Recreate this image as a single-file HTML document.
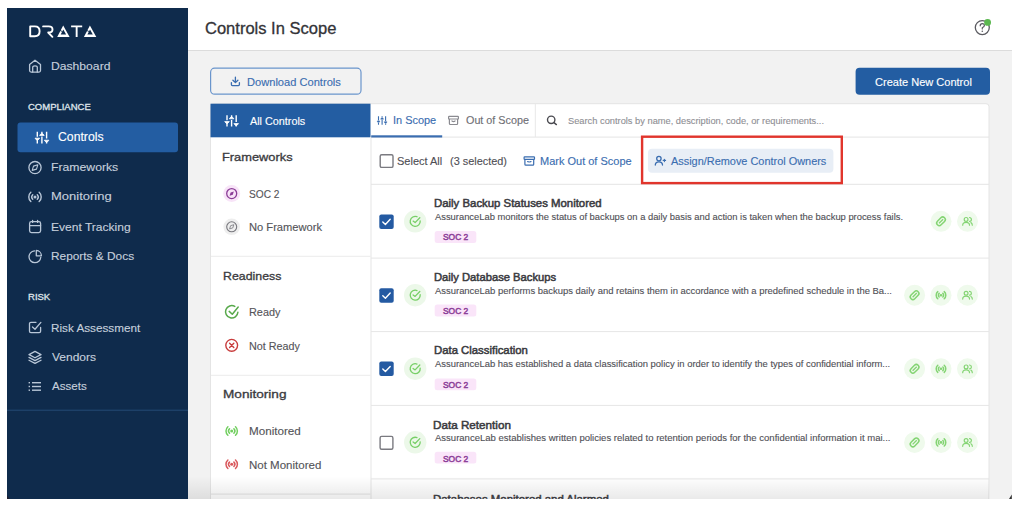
<!DOCTYPE html>
<html><head><meta charset="utf-8">
<style>
html,body{margin:0;padding:0;background:#fff;width:1024px;height:507px;overflow:hidden;}
body{position:relative;font-family:"Liberation Sans",sans-serif;}
.t{position:absolute;white-space:nowrap;line-height:1;transform-origin:0 0;}
svg.ov{position:absolute;left:0;top:0;}
</style></head><body>
<svg class="ov" width="1024" height="507" viewBox="0 0 1024 507">
<defs>
<linearGradient id="btm" x1="0" y1="0" x2="0" y2="1">
<stop offset="0" stop-color="#000" stop-opacity="0"/>
<stop offset="1" stop-color="#000" stop-opacity="0.085"/>
</linearGradient>
<linearGradient id="lsh" x1="0" y1="0" x2="1" y2="0">
<stop offset="0" stop-color="#fff" stop-opacity="0.0"/>
<stop offset="0.3" stop-color="#fff" stop-opacity="0.5"/>
<stop offset="1" stop-color="#fff" stop-opacity="0"/>
</linearGradient>
</defs>
<!-- sidebar -->
<rect x="7" y="8" width="181" height="491" fill="#0f2b4c"/>
<rect x="7" y="409.7" width="181" height="1" fill="#244a75"/>
<rect x="17.5" y="122.6" width="160.5" height="29.6" rx="3" fill="#235da2"/>
<!-- main -->
<rect x="188" y="8" width="824" height="491" fill="#f2f2f2"/>
<rect x="188" y="8" width="824" height="42" fill="#ffffff"/>
<rect x="188" y="50" width="824" height="1" fill="#dcdcdc"/>
<!-- download button -->
<rect x="210.6" y="68.2" width="150.4" height="26" rx="4" fill="none" stroke="#6a95cc" stroke-width="1.2"/>
<!-- create button -->
<rect x="855.6" y="67.8" width="134.4" height="27" rx="4" fill="#235da2"/>
<!-- card -->
<rect x="210.5" y="103.7" width="778.5" height="420" rx="3" fill="#ffffff" stroke="#e4e4e4" stroke-width="1"/>
<rect x="210.5" y="103.7" width="160" height="33.6" fill="#235da2"/>
<!-- filter panel border & dividers -->
<rect x="370.5" y="137" width="1" height="370" fill="#e6e6e6"/>
<rect x="211" y="255.8" width="159.5" height="1" fill="#ececec"/>
<rect x="211" y="374.8" width="159.5" height="1" fill="#ececec"/>
<rect x="211" y="493.6" width="159.5" height="1" fill="#e4e4e4"/>
<!-- tabs -->
<rect x="371" y="136.6" width="618" height="1" fill="#e4e4e4"/>
<rect x="371.2" y="135.3" width="71" height="2.2" fill="#3a6db0"/>
<rect x="534.8" y="104" width="1" height="33" fill="#e8e8e8"/>
<rect x="371" y="183.8" width="618" height="1" fill="#e4e4e4"/>
<!-- row dividers -->
<rect x="371" y="257.6" width="618" height="1" fill="#e6e6e6"/>
<rect x="371" y="331.1" width="618" height="1" fill="#e6e6e6"/>
<rect x="371" y="404.9" width="618" height="1" fill="#e6e6e6"/>
<rect x="371" y="478.4" width="618" height="1" fill="#e6e6e6"/>
<!-- assign button + red box -->
<rect x="648" y="148.8" width="185.4" height="24" rx="4" fill="#e8eef6"/>
<rect x="642.1" y="136.7" width="199.7" height="46.4" fill="none" stroke="#e1352c" stroke-width="2.4"/>
<!-- ICONS -->
<!-- DRATA logo -->
<g fill="none" stroke="#ffffff" stroke-width="1.9" stroke-linejoin="round">
<path d="M30.2,26.4 H34.8 Q39.6,26.4 39.6,31.3 Q39.6,36.2 34.8,36.2 H30.2 Z"/>
<path d="M43.1,26.4 H48.8 Q52.5,26.4 52.5,29.5 Q52.5,32.5 48.8,32.5 H48.2 L52.4,36.8" stroke-linecap="round"/>
<path d="M71.1,26.4 H82.2 M76.65,26.4 V37.1"/>
</g>
<g fill="#ffffff" fill-rule="evenodd">
<path d="M57.2,37.1 L63.2,25.5 L69.6,37.1 Z M60.7,34.5 L63.3,29.4 L66.1,34.5 Z"/>
<path d="M83.9,37.1 L89.9,25.5 L96.3,37.1 Z M87.4,34.5 L90,29.4 L92.8,34.5 Z"/>
</g>
<g stroke="#0f2b4c" stroke-width="0.9">
<path d="M59.6,30.2 L62.4,31.6"/>
<path d="M86.3,30.2 L89.1,31.6"/>
</g>
<!-- sidebar icons -->
<g fill="none" stroke="#b9c7d8" stroke-width="1.3" stroke-linecap="round" stroke-linejoin="round">
<!-- home -->
<path d="M29.6,64.4 L35,60.2 L40.5,64.4 V70.6 Q40.5,72.1 39,72.1 H31.1 Q29.6,72.1 29.6,70.6 Z"/>
<path d="M32.7,72 V67.2 Q32.7,65.8 35,65.8 Q37.3,65.8 37.3,67.2 V72"/>
<!-- compass -->
<circle cx="35" cy="167.6" r="6.1"/>
<path d="M32.2,170.4 L33.5,166.1 L37.8,164.8 L36.5,169.1 Z" fill="none" stroke-width="1.1"/>
<!-- monitoring -->
</g>
<g fill="none" stroke="#b9c7d8" stroke-width="1.4" stroke-linecap="round"><circle cx="35" cy="196.9" r="1.5" fill="#b9c7d8" stroke="none"/><path d="M32.74,194.64 A3.2,3.2 0 0 0 32.74,199.16 M37.26,194.64 A3.2,3.2 0 0 1 37.26,199.16"/><path d="M30.85,192.29 A6.2,6.2 0 0 0 30.85,201.51 M39.15,192.29 A6.2,6.2 0 0 1 39.15,201.51"/></g>
<g fill="none" stroke="#b9c7d8" stroke-width="1.3" stroke-linecap="round" stroke-linejoin="round">
<!-- calendar -->
<rect x="29.6" y="221.6" width="11" height="11" rx="1.8"/>
<path d="M29.6,225.6 H40.6 M32.6,220.4 V222.4 M37.6,220.4 V222.4"/>
<!-- pie -->
<path d="M34.4,250.9 A5.9,5.9 0 1 0 40.8,257.3"/>
<path d="M36.3,250.4 V255.8 H41.4 A5.4,5.4 0 0 0 36.3,250.4 Z"/>
<!-- risk check square -->
<path d="M40.6,327.5 V331.2 Q40.6,332.6 39.2,332.6 H30.9 Q29.5,332.6 29.5,331.2 V323.6 Q29.5,322.3 30.9,322.3 H36"/>
<path d="M32.5,326.9 L35,329.2 L40.9,322.4"/>
<!-- layers -->
<path d="M35,351.4 L41,354.6 L35,357.8 L29,354.6 Z"/>
<path d="M29,357.4 L35,360.6 L41,357.4 M29,360.2 L35,363.4 L41,360.2"/>
</g>
<!-- list icon -->
<g fill="#b9c7d8">
<rect x="28.6" y="382" width="1.4" height="1.4"/><rect x="28.6" y="385.8" width="1.4" height="1.4"/><rect x="28.6" y="389.5" width="1.4" height="1.4"/>
<rect x="32" y="382" width="9" height="1.4"/><rect x="32" y="385.8" width="9" height="1.4"/><rect x="32" y="389.5" width="9" height="1.4"/>
</g>
<!-- controls sliders (sidebar active, white) -->
<g stroke="#ffffff" stroke-width="1.4" stroke-linecap="butt" fill="#ffffff">
<path d="M37.3,131.8 V136.8 M37.3,139.4 V143.4 M41.9,131.8 V133.6 M41.9,136.6 V143.4 M46.6,131.8 V138.6 M46.6,141.4 V143.4" fill="none"/>
<path d="M35,138.2 H39.6 L38,140 H36.6 Z" stroke-width="0.8"/>
<path d="M39.6,135.4 H44.2 L42.6,133.6 H41.2 Z" stroke-width="0.8"/>
<path d="M44.3,140.2 H48.9 L47.3,142 H45.9 Z" stroke-width="0.8"/>
</g>
<!-- All Controls sliders (white) -->
<g stroke="#ffffff" stroke-width="1.4" fill="#ffffff">
<path d="M227,115.2 V120.2 M227,122.8 V126.6 M231.6,115.2 V117 M231.6,120 V126.6 M236.2,115.2 V122 M236.2,124.8 V126.6" fill="none"/>
<path d="M224.7,121.6 H229.3 L227.7,123.4 H226.3 Z" stroke-width="0.8"/>
<path d="M229.3,118.8 H233.9 L232.3,117 H230.9 Z" stroke-width="0.8"/>
<path d="M233.9,123.6 H238.5 L236.9,125.4 H235.5 Z" stroke-width="0.8"/>
</g>
<!-- In Scope sliders (blue) -->
<g stroke="#3a6db0" stroke-width="1.1" fill="#3a6db0">
<path d="M378.5,116.2 V120.4 M378.5,122.8 V124.8 M382.1,116.2 V117.4 M382.1,119.8 V124.8 M385.6,116.2 V121.2 M385.6,123.6 V124.8" fill="none"/>
<path d="M377.1,121 H379.9 L379.2,122.3 H377.8 Z" stroke-width="0.5"/>
<path d="M380.7,119.2 H383.5 L382.8,117.9 H381.4 Z" stroke-width="0.5"/>
<path d="M384.2,121.8 H387 L386.3,123.1 H384.9 Z" stroke-width="0.5"/>
</g>
<!-- download icon -->
<g fill="none" stroke="#3a6db0" stroke-width="1.3" stroke-linecap="round" stroke-linejoin="round">
<path d="M235.4,77.2 V82.4 M232.9,80.2 L235.4,82.6 L237.9,80.2"/>
<path d="M231.4,82.6 V84.6 Q231.4,85.6 232.4,85.6 H238.4 Q239.4,85.6 239.4,84.6 V82.6"/>
</g>
<!-- out of scope archive (gray) -->
<g fill="none" stroke="#8a8a90" stroke-width="1.2" stroke-linejoin="round">
<rect x="448.6" y="116.4" width="9.8" height="2.6" rx="0.6"/>
<path d="M449.4,119 V123.6 Q449.4,124.5 450.3,124.5 H456.7 Q457.6,124.5 457.6,123.6 V119"/>
<path d="M451.8,120.6 Q451.8,121.6 453.5,121.6 Q455.2,121.6 455.2,120.6"/>
</g>
<!-- mark out of scope archive (blue) -->
<g fill="none" stroke="#3a6db0" stroke-width="1.2" stroke-linejoin="round">
<rect x="524.1" y="156.8" width="10.4" height="2.6" rx="0.6"/>
<path d="M524.9,159.4 V164.2 Q524.9,165.1 525.8,165.1 H532.8 Q533.7,165.1 533.7,164.2 V159.4"/>
<path d="M527.5,161 Q527.5,162 529.3,162 Q531.1,162 531.1,161"/>
</g>
<!-- search -->
<g fill="none" stroke="#4a4a50" stroke-width="1.4" stroke-linecap="round">
<circle cx="551.2" cy="119.8" r="3.7"/>
<path d="M554,122.6 L556.4,124.6"/>
</g>
<!-- user plus -->
<g fill="none" stroke="#3a6db0" stroke-width="1.3" stroke-linecap="round">
<circle cx="658.9" cy="158.6" r="2.2"/>
<path d="M655.3,165 Q655.3,161.8 658.9,161.8 Q662.5,161.8 662.5,165"/>
<path d="M663.2,160.4 H665.6 M664.4,159.2 V161.6" stroke-width="1.1"/>
</g>
<!-- help icon -->
<circle cx="982.3" cy="27.6" r="7" fill="none" stroke="#5a5a60" stroke-width="1.3"/>
<path d="M980.2,25.8 Q980.2,23.6 982.3,23.6 Q984.4,23.6 984.4,25.6 Q984.4,26.9 982.3,27.8 V29" fill="none" stroke="#5a5a60" stroke-width="1.2" stroke-linecap="round"/>
<circle cx="982.3" cy="31.2" r="0.8" fill="#5a5a60"/>
<circle cx="987.6" cy="22.4" r="3.4" fill="#5bb84f"/>
<!-- select all checkbox -->
<rect x="380.2" y="154.8" width="12.8" height="12.6" rx="1.5" fill="#fff" stroke="#7a7a80" stroke-width="1.4"/>
<!-- filter icons -->
<circle cx="231.7" cy="193.6" r="8.5" fill="#f8e4f8"/>
<circle cx="231.7" cy="193.6" r="5" fill="none" stroke="#8b3d97" stroke-width="1.3"/>
<path d="M229.6,195.7 L230.6,192.5 L233.8,191.5 L232.8,194.7 Z" fill="#8b3d97"/>
<circle cx="231.7" cy="226.8" r="8.3" fill="#eeeeee"/>
<circle cx="231.7" cy="226.8" r="5" fill="none" stroke="#77777d" stroke-width="1.1"/>
<path d="M229.6,228.9 L230.6,225.7 L233.8,224.7 L232.8,227.9 Z" fill="none" stroke="#77777d" stroke-width="0.8"/>
<!-- ready -->
<g fill="none" stroke="#58a94b" stroke-width="1.5" stroke-linecap="round" stroke-linejoin="round">
<path d="M234.8,306.4 A6.2,6.2 0 1 0 237.9,312.3"/>
<path d="M229.2,311.4 L232.3,314.2 L238.2,307"/>
</g>
<!-- not ready -->
<g fill="none" stroke="#c83c3c" stroke-width="1.4" stroke-linecap="round">
<circle cx="231.7" cy="345.3" r="5.9"/>
<path d="M229.6,343.2 L233.8,347.4 M233.8,343.2 L229.6,347.4"/>
</g>
<!-- monitored -->
<g fill="none" stroke="#72cf60" stroke-width="1.5" stroke-linecap="round"><circle cx="231.7" cy="431" r="1.5" fill="#72cf60" stroke="none"/><path d="M229.51,428.81 A3.1,3.1 0 0 0 229.51,433.19 M233.89,428.81 A3.1,3.1 0 0 1 233.89,433.19"/><path d="M227.89,426.76 A5.7,5.7 0 0 0 227.89,435.24 M235.51,426.76 A5.7,5.7 0 0 1 235.51,435.24"/></g>
<g fill="none" stroke="#d9585c" stroke-width="1.5" stroke-linecap="round"><circle cx="231.7" cy="464.3" r="1.5" fill="#d9585c" stroke="none"/><path d="M229.51,462.11 A3.1,3.1 0 0 0 229.51,466.49 M233.89,462.11 A3.1,3.1 0 0 1 233.89,466.49"/><path d="M227.89,460.06 A5.7,5.7 0 0 0 227.89,468.54 M235.51,460.06 A5.7,5.7 0 0 1 235.51,468.54"/></g>

<rect x="379.3" y="214.5" width="14.4" height="14.4" rx="2" fill="#245aa2"/>
<path d="M382.8,221.9 L385.4,224.4 L390.2,219.3" fill="none" stroke="#fff" stroke-width="1.4" stroke-linecap="round" stroke-linejoin="round"/>
<circle cx="415.2" cy="221.4" r="11.2" fill="#ecf8e9"/>
<path d="M416.99,216.73 A5.0,5.0 0 1 0 420.18,220.96" fill="none" stroke="#77cf67" stroke-width="1.3" stroke-linecap="round"/>
<path d="M413.10,221.10 L415.10,222.60 L419.80,217.70" fill="none" stroke="#77cf67" stroke-width="1.3" stroke-linecap="round" stroke-linejoin="round"/>
<rect x="434.7" y="231.00" width="41.6" height="11.9" rx="2.5" fill="#fae5f9"/>
<circle cx="941.0" cy="221.3" r="10.5" fill="#effaec"/>
<g transform="translate(941.0,221.3) rotate(-45)"><rect x="-5" y="-2.6" width="10" height="5.2" rx="2.6" fill="none" stroke="#84d473" stroke-width="1.5"/><path d="M-2.8,0 H3" stroke="#84d473" stroke-width="1.3"/></g>
<circle cx="967.5" cy="221.3" r="10.5" fill="#effaec"/>
<g fill="none" stroke="#84d473" stroke-width="1.2" stroke-linecap="round"><circle cx="966.1" cy="219.4" r="1.9"/><path d="M962.7,225.20000000000002 Q962.7,222.3 966.1,222.3 Q969.5,222.3 969.5,225.20000000000002"/><path d="M969.5,217.5 A1.9,1.9 0 0 1 969.5,221.3"/><path d="M970.9,222.60000000000002 Q972.3,223.3 972.3,225.20000000000002"/></g>
<rect x="379.3" y="288.3" width="14.4" height="14.4" rx="2" fill="#245aa2"/>
<path d="M382.8,295.7 L385.4,298.2 L390.2,293.1" fill="none" stroke="#fff" stroke-width="1.4" stroke-linecap="round" stroke-linejoin="round"/>
<circle cx="415.2" cy="295.2" r="11.2" fill="#ecf8e9"/>
<path d="M416.99,290.53 A5.0,5.0 0 1 0 420.18,294.76" fill="none" stroke="#77cf67" stroke-width="1.3" stroke-linecap="round"/>
<path d="M413.10,294.90 L415.10,296.40 L419.80,291.50" fill="none" stroke="#77cf67" stroke-width="1.3" stroke-linecap="round" stroke-linejoin="round"/>
<rect x="434.7" y="304.50" width="41.6" height="11.9" rx="2.5" fill="#fae5f9"/>
<circle cx="914.6" cy="295.2" r="10.5" fill="#effaec"/>
<g transform="translate(914.6,295.2) rotate(-45)"><rect x="-5" y="-2.6" width="10" height="5.2" rx="2.6" fill="none" stroke="#84d473" stroke-width="1.5"/><path d="M-2.8,0 H3" stroke="#84d473" stroke-width="1.3"/></g>
<circle cx="941.0" cy="295.2" r="10.5" fill="#effaec"/>
<g fill="none" stroke="#84d473" stroke-width="1.5" stroke-linecap="round"><circle cx="941.0" cy="295.2" r="1.3" fill="#84d473" stroke="none"/><path d="M939.16,293.36 A2.6,2.6 0 0 0 939.16,297.04 M942.84,293.36 A2.6,2.6 0 0 1 942.84,297.04"/><path d="M937.79,291.63 A4.8,4.8 0 0 0 937.79,298.77 M944.21,291.63 A4.8,4.8 0 0 1 944.21,298.77"/></g>
<circle cx="967.5" cy="295.2" r="10.5" fill="#effaec"/>
<g fill="none" stroke="#84d473" stroke-width="1.2" stroke-linecap="round"><circle cx="966.1" cy="293.3" r="1.9"/><path d="M962.7,299.09999999999997 Q962.7,296.2 966.1,296.2 Q969.5,296.2 969.5,299.09999999999997"/><path d="M969.5,291.4 A1.9,1.9 0 0 1 969.5,295.2"/><path d="M970.9,296.5 Q972.3,297.2 972.3,299.09999999999997"/></g>
<rect x="379.3" y="361.6" width="14.4" height="14.4" rx="2" fill="#245aa2"/>
<path d="M382.8,369.0 L385.4,371.5 L390.2,366.40000000000003" fill="none" stroke="#fff" stroke-width="1.4" stroke-linecap="round" stroke-linejoin="round"/>
<circle cx="415.2" cy="368.7" r="11.2" fill="#ecf8e9"/>
<path d="M416.99,364.03 A5.0,5.0 0 1 0 420.18,368.26" fill="none" stroke="#77cf67" stroke-width="1.3" stroke-linecap="round"/>
<path d="M413.10,368.40 L415.10,369.90 L419.80,365.00" fill="none" stroke="#77cf67" stroke-width="1.3" stroke-linecap="round" stroke-linejoin="round"/>
<rect x="434.7" y="378.40" width="41.6" height="11.9" rx="2.5" fill="#fae5f9"/>
<circle cx="914.6" cy="368.8" r="10.5" fill="#effaec"/>
<g transform="translate(914.6,368.8) rotate(-45)"><rect x="-5" y="-2.6" width="10" height="5.2" rx="2.6" fill="none" stroke="#84d473" stroke-width="1.5"/><path d="M-2.8,0 H3" stroke="#84d473" stroke-width="1.3"/></g>
<circle cx="941.0" cy="368.8" r="10.5" fill="#effaec"/>
<g fill="none" stroke="#84d473" stroke-width="1.5" stroke-linecap="round"><circle cx="941.0" cy="368.8" r="1.3" fill="#84d473" stroke="none"/><path d="M939.16,366.96 A2.6,2.6 0 0 0 939.16,370.64 M942.84,366.96 A2.6,2.6 0 0 1 942.84,370.64"/><path d="M937.79,365.23 A4.8,4.8 0 0 0 937.79,372.37 M944.21,365.23 A4.8,4.8 0 0 1 944.21,372.37"/></g>
<circle cx="967.5" cy="368.8" r="10.5" fill="#effaec"/>
<g fill="none" stroke="#84d473" stroke-width="1.2" stroke-linecap="round"><circle cx="966.1" cy="366.90000000000003" r="1.9"/><path d="M962.7,372.7 Q962.7,369.8 966.1,369.8 Q969.5,369.8 969.5,372.7"/><path d="M969.5,365.0 A1.9,1.9 0 0 1 969.5,368.8"/><path d="M970.9,370.1 Q972.3,370.8 972.3,372.7"/></g>
<rect x="380.1" y="436.40000000000003" width="12.8" height="12.8" rx="1.5" fill="#fff" stroke="#7a7a80" stroke-width="1.4"/>
<circle cx="415.2" cy="442.3" r="11.2" fill="#ecf8e9"/>
<path d="M416.99,437.63 A5.0,5.0 0 1 0 420.18,441.86" fill="none" stroke="#77cf67" stroke-width="1.3" stroke-linecap="round"/>
<path d="M413.10,442.00 L415.10,443.50 L419.80,438.60" fill="none" stroke="#77cf67" stroke-width="1.3" stroke-linecap="round" stroke-linejoin="round"/>
<rect x="434.7" y="451.70" width="41.6" height="11.9" rx="2.5" fill="#fae5f9"/>
<circle cx="914.6" cy="442.4" r="10.5" fill="#effaec"/>
<g transform="translate(914.6,442.4) rotate(-45)"><rect x="-5" y="-2.6" width="10" height="5.2" rx="2.6" fill="none" stroke="#84d473" stroke-width="1.5"/><path d="M-2.8,0 H3" stroke="#84d473" stroke-width="1.3"/></g>
<circle cx="941.0" cy="442.4" r="10.5" fill="#effaec"/>
<g fill="none" stroke="#84d473" stroke-width="1.5" stroke-linecap="round"><circle cx="941.0" cy="442.4" r="1.3" fill="#84d473" stroke="none"/><path d="M939.16,440.56 A2.6,2.6 0 0 0 939.16,444.24 M942.84,440.56 A2.6,2.6 0 0 1 942.84,444.24"/><path d="M937.79,438.83 A4.8,4.8 0 0 0 937.79,445.97 M944.21,438.83 A4.8,4.8 0 0 1 944.21,445.97"/></g>
<circle cx="967.5" cy="442.4" r="10.5" fill="#effaec"/>
<g fill="none" stroke="#84d473" stroke-width="1.2" stroke-linecap="round"><circle cx="966.1" cy="440.5" r="1.9"/><path d="M962.7,446.29999999999995 Q962.7,443.4 966.1,443.4 Q969.5,443.4 969.5,446.29999999999995"/><path d="M969.5,438.59999999999997 A1.9,1.9 0 0 1 969.5,442.4"/><path d="M970.9,443.7 Q972.3,444.4 972.3,446.29999999999995"/></g>
<!-- bottom shade -->
<rect x="188" y="476" width="801" height="23" fill="url(#btm)"/>
<path d="M1011.8,494.5 L1011.8,499 L1009,499 Z" fill="#333"/>
<path d="M7,495.5 L7,499 L9.5,499 Z" fill="#2a1a20" opacity="0.7"/>
</svg>
<div class="t" style="left:51.24px;top:60.81px;font-size:11.5px;font-weight:400;color:#c6d0dc;transform:scaleX(1.0564);-webkit-text-stroke:0.12px #c6d0dc">Dashboard</div>
<div class="t" style="left:28.40px;top:102.18px;font-size:9.5px;font-weight:400;color:#dfe4ea;transform:scaleX(0.9984);-webkit-text-stroke:0.32px #dfe4ea">COMPLIANCE</div>
<div class="t" style="left:58.10px;top:131.43px;font-size:12px;font-weight:400;color:#ffffff;transform:scaleX(1.0188);-webkit-text-stroke:0.12px #ffffff">Controls</div>
<div class="t" style="left:51.14px;top:162.16px;font-size:11.5px;font-weight:400;color:#c6d0dc;transform:scaleX(1.0629);-webkit-text-stroke:0.12px #c6d0dc">Frameworks</div>
<div class="t" style="left:51.07px;top:191.31px;font-size:11.5px;font-weight:400;color:#c6d0dc;transform:scaleX(1.1288);-webkit-text-stroke:0.12px #c6d0dc">Monitoring</div>
<div class="t" style="left:51.15px;top:221.61px;font-size:11.5px;font-weight:400;color:#c6d0dc;transform:scaleX(1.0467);-webkit-text-stroke:0.12px #c6d0dc">Event Tracking</div>
<div class="t" style="left:51.17px;top:251.31px;font-size:11.5px;font-weight:400;color:#c6d0dc;transform:scaleX(1.0316);-webkit-text-stroke:0.12px #c6d0dc">Reports &amp; Docs</div>
<div class="t" style="left:27.70px;top:291.63px;font-size:9.5px;font-weight:400;color:#dfe4ea;transform:scaleX(1.0023);-webkit-text-stroke:0.32px #dfe4ea">RISK</div>
<div class="t" style="left:50.98px;top:322.66px;font-size:11.5px;font-weight:400;color:#c6d0dc;transform:scaleX(1.0195);-webkit-text-stroke:0.12px #c6d0dc">Risk Assessment</div>
<div class="t" style="left:52.00px;top:351.91px;font-size:11.5px;font-weight:400;color:#c6d0dc;transform:scaleX(1.0429);-webkit-text-stroke:0.12px #c6d0dc">Vendors</div>
<div class="t" style="left:51.90px;top:381.11px;font-size:11.5px;font-weight:400;color:#c6d0dc;transform:scaleX(1.0059);-webkit-text-stroke:0.12px #c6d0dc">Assets</div>
<div class="t" style="left:204.57px;top:21.14px;font-size:16px;font-weight:400;color:#333338;transform:scaleX(1.0325);-webkit-text-stroke:0.3px #333338">Controls In Scope</div>
<div class="t" style="left:246.84px;top:77.37px;font-size:10.5px;font-weight:400;color:#3a6db0;transform:scaleX(1.0580);-webkit-text-stroke:0.12px #3a6db0">Download Controls</div>
<div class="t" style="left:875.20px;top:77.07px;font-size:10.5px;font-weight:400;color:#ffffff;transform:scaleX(1.0504);-webkit-text-stroke:0.12px #ffffff">Create New Control</div>
<div class="t" style="left:249.70px;top:116.12px;font-size:10.5px;font-weight:400;color:#ffffff;transform:scaleX(1.0296);-webkit-text-stroke:0.12px #ffffff">All Controls</div>
<div class="t" style="left:222.48px;top:151.96px;font-size:11.5px;font-weight:400;color:#3b3b40;transform:scaleX(1.1161);-webkit-text-stroke:0.32px #3b3b40">Frameworks</div>
<div class="t" style="left:248.93px;top:189.22px;font-size:10.5px;font-weight:400;color:#545459;transform:scaleX(0.9667);-webkit-text-stroke:0.12px #545459">SOC 2</div>
<div class="t" style="left:248.84px;top:222.47px;font-size:10.5px;font-weight:400;color:#545459;transform:scaleX(1.0618);-webkit-text-stroke:0.12px #545459">No Framework</div>
<div class="t" style="left:222.73px;top:271.26px;font-size:11.5px;font-weight:400;color:#3b3b40;transform:scaleX(1.0736);-webkit-text-stroke:0.32px #3b3b40">Readiness</div>
<div class="t" style="left:249.07px;top:306.62px;font-size:10.5px;font-weight:400;color:#545459;transform:scaleX(1.0345);-webkit-text-stroke:0.12px #545459">Ready</div>
<div class="t" style="left:249.07px;top:341.07px;font-size:10.5px;font-weight:400;color:#545459;transform:scaleX(1.0265);-webkit-text-stroke:0.12px #545459">Not Ready</div>
<div class="t" style="left:222.62px;top:389.06px;font-size:11.5px;font-weight:400;color:#3b3b40;transform:scaleX(1.1827);-webkit-text-stroke:0.32px #3b3b40">Monitoring</div>
<div class="t" style="left:248.99px;top:425.67px;font-size:10.5px;font-weight:400;color:#545459;transform:scaleX(1.1089);-webkit-text-stroke:0.12px #545459">Monitored</div>
<div class="t" style="left:249.00px;top:460.07px;font-size:10.5px;font-weight:400;color:#545459;transform:scaleX(1.0969);-webkit-text-stroke:0.12px #545459">Not Monitored</div>
<div class="t" style="left:393.26px;top:115.37px;font-size:10.5px;font-weight:400;color:#3a6db0;transform:scaleX(1.0425);-webkit-text-stroke:0.12px #3a6db0">In Scope</div>
<div class="t" style="left:465.60px;top:115.37px;font-size:10.5px;font-weight:400;color:#6e6e74;transform:scaleX(1.0262);-webkit-text-stroke:0.12px #6e6e74">Out of Scope</div>
<div class="t" style="left:568.02px;top:116.18px;font-size:9.5px;font-weight:400;color:#8f8f95;transform:scaleX(0.9773);-webkit-text-stroke:0.12px #8f8f95">Search controls by name, description, code, or requirements...</div>
<div class="t" style="left:397.45px;top:155.97px;font-size:10.5px;font-weight:400;color:#4f4f55;transform:scaleX(1.0476);-webkit-text-stroke:0.12px #4f4f55">Select All</div>
<div class="t" style="left:450.36px;top:155.97px;font-size:10.5px;font-weight:400;color:#4f4f55;transform:scaleX(1.0377);-webkit-text-stroke:0.12px #4f4f55">(3 selected)</div>
<div class="t" style="left:539.55px;top:155.97px;font-size:10.5px;font-weight:400;color:#3a6db0;transform:scaleX(1.0465);-webkit-text-stroke:0.12px #3a6db0">Mark Out of Scope</div>
<div class="t" style="left:671.40px;top:155.97px;font-size:10.5px;font-weight:400;color:#3a6db0;transform:scaleX(1.0396);-webkit-text-stroke:0.12px #3a6db0">Assign/Remove Control Owners</div>
<div class="t" style="left:433.70px;top:198.34px;font-size:11px;font-weight:400;color:#3a3a40;transform:scaleX(1.0347);-webkit-text-stroke:0.5px #3a3a40">Daily Backup Statuses Monitored</div>
<div class="t" style="left:434.70px;top:212.08px;font-size:9.5px;font-weight:400;color:#505056;transform:scaleX(0.9859);-webkit-text-stroke:0.12px #505056">AssuranceLab monitors the status of backups on a daily basis and action is taken when the backup process fails.</div>
<div class="t" style="left:433.90px;top:272.24px;font-size:11px;font-weight:400;color:#3a3a40;transform:scaleX(1.0184);-webkit-text-stroke:0.5px #3a3a40">Daily Database Backups</div>
<div class="t" style="left:434.70px;top:286.28px;font-size:9.5px;font-weight:400;color:#505056;transform:scaleX(0.9935);-webkit-text-stroke:0.12px #505056">AssuranceLab performs backups daily and retains them in accordance with a predefined schedule in the Ba...</div>
<div class="t" style="left:433.90px;top:345.44px;font-size:11px;font-weight:400;color:#3a3a40;transform:scaleX(1.0310);-webkit-text-stroke:0.5px #3a3a40">Data Classification</div>
<div class="t" style="left:434.70px;top:359.38px;font-size:9.5px;font-weight:400;color:#505056;transform:scaleX(0.9908);-webkit-text-stroke:0.12px #505056">AssuranceLab has established a data classification policy in order to identify the types of confidential inform...</div>
<div class="t" style="left:433.30px;top:419.54px;font-size:11px;font-weight:400;color:#3a3a40;transform:scaleX(1.0619);-webkit-text-stroke:0.5px #3a3a40">Data Retention</div>
<div class="t" style="left:434.70px;top:433.08px;font-size:9.5px;font-weight:400;color:#505056;transform:scaleX(1.0018);-webkit-text-stroke:0.12px #505056">AssuranceLab establishes written policies related to retention periods for the confidential information it mai...</div>
<div class="t" style="left:433.30px;top:493.74px;font-size:11px;font-weight:400;color:#3a3a40;transform:scaleX(1.0385);-webkit-text-stroke:0.5px #3a3a40">Databases Monitored and Alarmed</div>
<div class="t" style="left:443.00px;top:233.36px;font-size:9px;font-weight:400;color:#8b3d97;transform:scaleX(0.9370);-webkit-text-stroke:0.5px #8b3d97">SOC 2</div>
<div class="t" style="left:443.00px;top:307.36px;font-size:9px;font-weight:400;color:#8b3d97;transform:scaleX(0.9370);-webkit-text-stroke:0.5px #8b3d97">SOC 2</div>
<div class="t" style="left:443.00px;top:381.16px;font-size:9px;font-weight:400;color:#8b3d97;transform:scaleX(0.9370);-webkit-text-stroke:0.5px #8b3d97">SOC 2</div>
<div class="t" style="left:443.00px;top:454.76px;font-size:9px;font-weight:400;color:#8b3d97;transform:scaleX(0.9370);-webkit-text-stroke:0.5px #8b3d97">SOC 2</div>
<div style="position:absolute;left:0;top:499px;width:1024px;height:8px;background:#fff;z-index:5"></div>
<div style="position:absolute;left:1012px;top:0;width:12px;height:507px;background:#fff;z-index:5"></div>
</body></html>
